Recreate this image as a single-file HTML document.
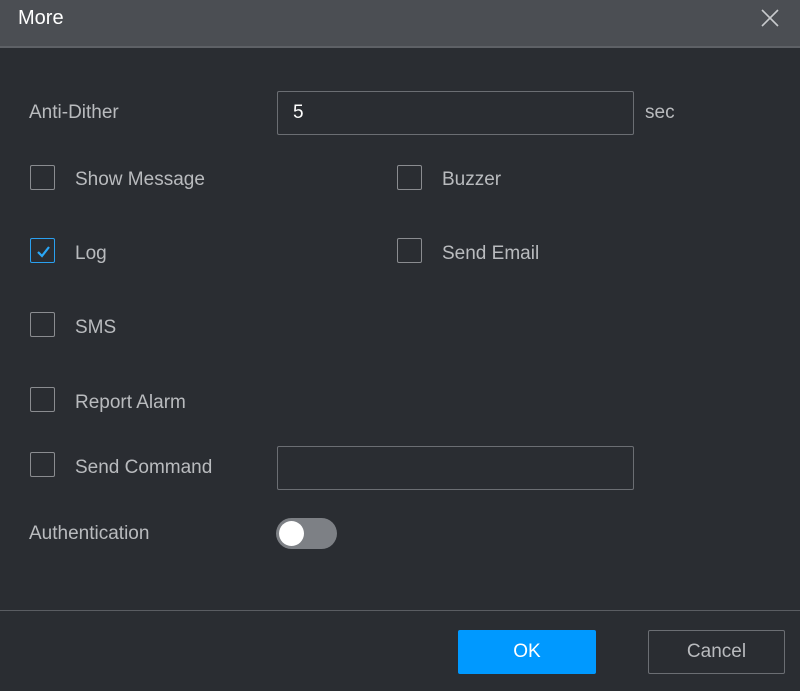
<!DOCTYPE html>
<html><head><style>
body{margin:0;width:800px;height:691px;background:#2a2d32;font-family:"Liberation Sans",sans-serif;position:relative;overflow:hidden}
.hd{position:absolute;left:0;top:0;width:800px;height:46px;background:#4b4e53;border-bottom:2px solid #5e6166}
.t{position:absolute;color:#b9bbbe;font-size:19px;line-height:20px}
.cb{position:absolute;width:23px;height:23px;border:1.5px solid #8a8c90;border-radius:2px}
.in{position:absolute;border:1px solid #6b6e73;border-radius:2px;background:#2a2d32}
</style></head><body>
<div class="hd"></div>
<div class="t" style="left:18px;top:8px;color:#fff;font-size:20px">More</div>
<svg style="position:absolute;left:761px;top:9px" width="18" height="18"><path d="M1 1L17 17M17 1L1 17" stroke="#c8cacd" stroke-width="1.6"/></svg>
<div class="t" style="left:29px;top:103px">Anti-Dither</div>
<div class="in" style="left:277px;top:91px;width:355px;height:42px"></div>
<div class="t" style="left:293px;top:103px;color:#fff">5</div>
<div class="t" style="left:645px;top:103px">sec</div>

<div class="cb" style="left:30px;top:165px"></div><div class="t" style="left:75px;top:170px">Show Message</div>
<div class="cb" style="left:397px;top:165px"></div><div class="t" style="left:442px;top:170px">Buzzer</div>
<div class="cb" style="left:30px;top:238px;border-color:#2aa0f0"></div>
<svg style="position:absolute;left:31px;top:239px" width="25" height="25"><path d="M7 13L11 17L18 8" fill="none" stroke="#2aa8f8" stroke-width="2.2"/></svg>
<div class="t" style="left:75px;top:244px">Log</div>
<div class="cb" style="left:397px;top:238px"></div><div class="t" style="left:442px;top:244px">Send Email</div>
<div class="cb" style="left:30px;top:312px"></div><div class="t" style="left:75px;top:318px">SMS</div>
<div class="cb" style="left:30px;top:387px"></div><div class="t" style="left:75px;top:393px">Report Alarm</div>
<div class="cb" style="left:30px;top:452px"></div><div class="t" style="left:75px;top:458px">Send Command</div>
<div class="in" style="left:277px;top:446px;width:355px;height:42px"></div>
<div class="t" style="left:29px;top:524px">Authentication</div>
<div style="position:absolute;left:276px;top:518px;width:61px;height:31px;border-radius:16px;background:#7d8085"></div>
<div style="position:absolute;left:279px;top:521px;width:25px;height:25px;border-radius:50%;background:#fff"></div>
<div style="position:absolute;left:0;top:610px;width:800px;height:1px;background:#5a5d62"></div>
<div style="position:absolute;left:458px;top:630px;width:138px;height:44px;background:#0099ff;border-radius:2px;color:#fff;font-size:19px;line-height:44px;text-align:center">OK</div>
<div style="position:absolute;left:648px;top:630px;width:135px;height:42px;border:1px solid #6b6e73;border-radius:2px;color:#b9bbbe;font-size:19px;line-height:42px;text-align:center">Cancel</div>
</body></html>
